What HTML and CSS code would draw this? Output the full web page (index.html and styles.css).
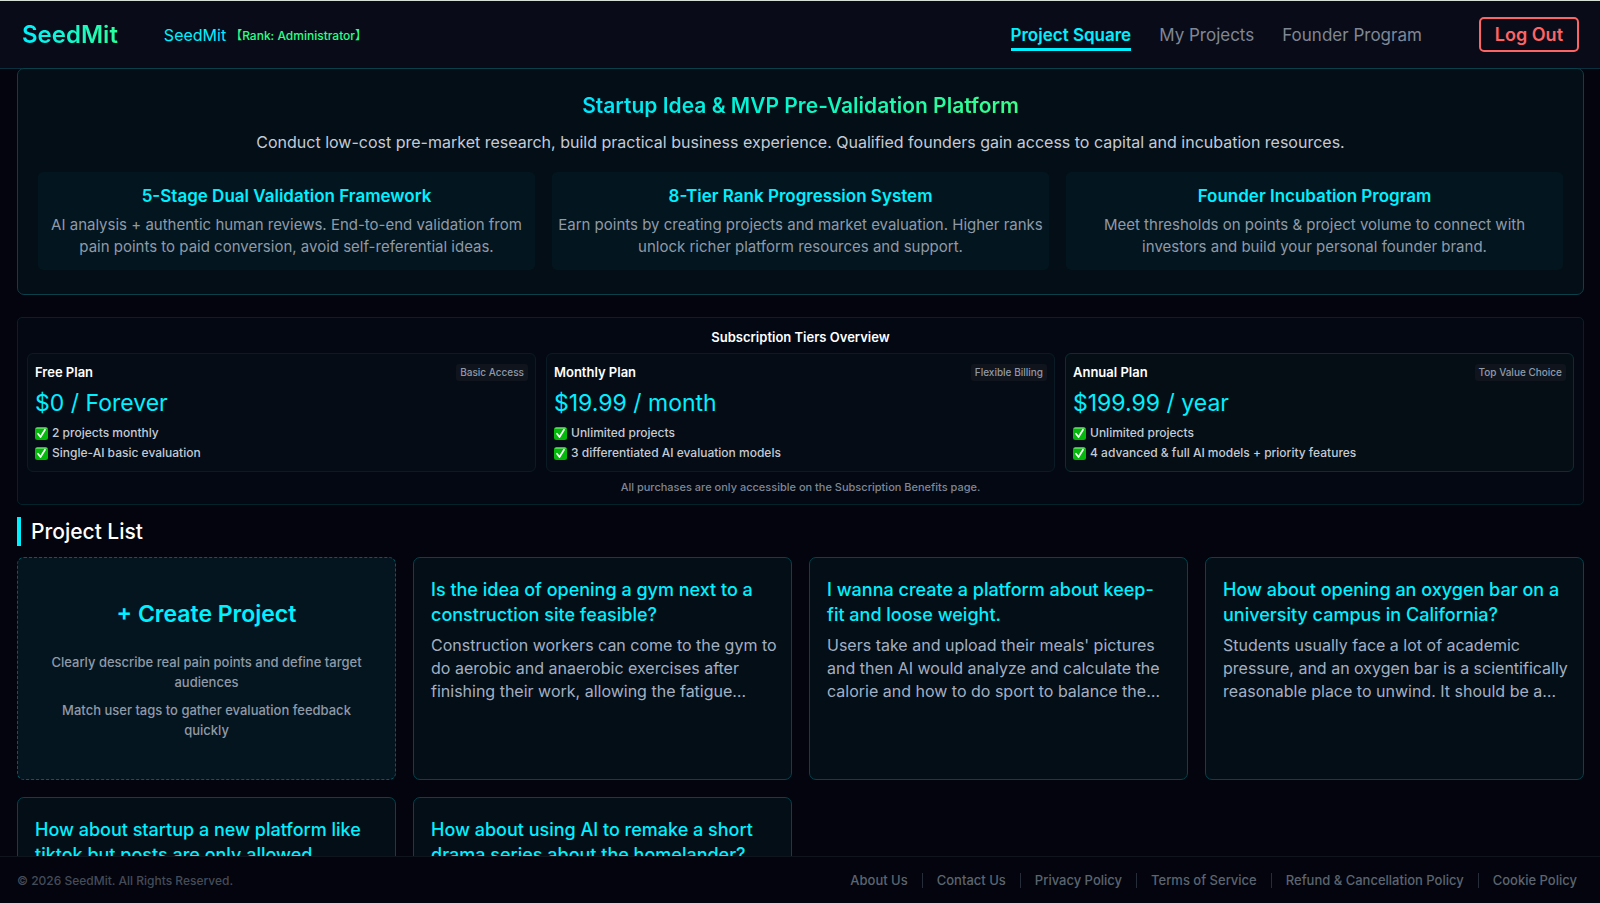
FILE: index.html
```html
<!DOCTYPE html>
<html lang="en">
<head>
    <meta charset="UTF-8">
    <meta name="viewport" content="width=device-width, initial-scale=1.0">
    <title>SeedMit - Project Square</title>
    <link rel="stylesheet" href="styles.css">
</head>
<body>
    <svg class="sprite" aria-hidden="true">
        <symbol id="check" viewBox="0 0 26 26">
            <rect x="0" y="0" width="26" height="26" rx="5" fill="#04b80c"/>
            <path d="M5 1h16a4 4 0 0 1 4 3H1a4 4 0 0 1 4-3z" fill="#4fd653"/>
            <path d="M6 13.5l5 6.5L20 5.5" fill="none" stroke="#fff" stroke-width="3.4" stroke-linecap="round" stroke-linejoin="round"/>
        </symbol>
    </svg>

    <header class="navbar">
        <a class="logo" href="#">SeedMit</a>
        <div class="user">
            <span class="user-name">SeedMit</span>
            <span class="user-rank">【Rank: Administrator】</span>
        </div>
        <nav class="nav-links">
            <a class="active" href="#">Project Square</a>
            <a href="#">My Projects</a>
            <a href="#">Founder Program</a>
        </nav>
        <button class="logout-btn" type="button">Log Out</button>
    </header>

    <main class="content">
        <section class="hero">
            <h1>Startup Idea &amp; MVP Pre-Validation Platform</h1>
            <p class="hero-text">Conduct low-cost pre-market research, build practical business experience. Qualified founders gain access to capital and incubation resources.</p>
            <div class="features">
                <div class="feature">
                    <h2>5-Stage Dual Validation Framework</h2>
                    <p>AI analysis + authentic human reviews. End-to-end validation from pain points to paid conversion, avoid self-referential ideas.</p>
                </div>
                <div class="feature">
                    <h2>8-Tier Rank Progression System</h2>
                    <p>Earn points by creating projects and market evaluation. Higher ranks unlock richer platform resources and support.</p>
                </div>
                <div class="feature">
                    <h2>Founder Incubation Program</h2>
                    <p>Meet thresholds on points &amp; project volume to connect with investors and build your personal founder brand.</p>
                </div>
            </div>
        </section>

        <section class="tiers">
            <h2 class="tiers-title">Subscription Tiers Overview</h2>
            <div class="plans">
                <div class="plan">
                    <div class="plan-head">
                        <h3>Free Plan</h3>
                        <span class="tag">Basic Access</span>
                    </div>
                    <div class="price">$0 / Forever</div>
                    <ul>
                        <li><svg class="check"><use href="#check"/></svg>2 projects monthly</li>
                        <li><svg class="check"><use href="#check"/></svg>Single-AI basic evaluation</li>
                    </ul>
                </div>
                <div class="plan">
                    <div class="plan-head">
                        <h3>Monthly Plan</h3>
                        <span class="tag">Flexible Billing</span>
                    </div>
                    <div class="price">$19.99 / month</div>
                    <ul>
                        <li><svg class="check"><use href="#check"/></svg>Unlimited projects</li>
                        <li><svg class="check"><use href="#check"/></svg>3 differentiated AI evaluation models</li>
                    </ul>
                </div>
                <div class="plan plan-best">
                    <div class="plan-head">
                        <h3>Annual Plan</h3>
                        <span class="tag">Top Value Choice</span>
                    </div>
                    <div class="price">$199.99 / year</div>
                    <ul>
                        <li><svg class="check"><use href="#check"/></svg>Unlimited projects</li>
                        <li><svg class="check"><use href="#check"/></svg>4 advanced &amp; full AI models + priority features</li>
                    </ul>
                </div>
            </div>
            <p class="tiers-note">All purchases are only accessible on the Subscription Benefits page.</p>
        </section>

        <h2 class="list-title">Project List</h2>
        <section class="projects">
            <a class="card create-card" href="#">
                <h3>+ Create Project</h3>
                <p>Clearly describe real pain points and define target audiences</p>
                <p>Match user tags to gather evaluation feedback quickly</p>
            </a>
            <article class="card">
                <h3>Is the idea of opening a gym next to a construction site feasible?</h3>
                <p>Construction workers can come to the gym to do aerobic and anaerobic exercises after finishing their work, allowing the fatigue…</p>
            </article>
            <article class="card">
                <h3>I wanna create a platform about keep-fit and loose weight.</h3>
                <p>Users take and upload their meals' pictures and then AI would analyze and calculate the calorie and how to do sport to balance the…</p>
            </article>
            <article class="card">
                <h3>How about opening an oxygen bar on a university campus in California?</h3>
                <p>Students usually face a lot of academic pressure, and an oxygen bar is a scientifically reasonable place to unwind. It should be a…</p>
            </article>
            <article class="card">
                <h3>How about startup a new platform like tiktok but posts are only allowed</h3>
            </article>
            <article class="card">
                <h3>How about using AI to remake a short drama series about the homelander?</h3>
            </article>
        </section>
    </main>

    <footer class="footer">
        <span>© 2026 SeedMit. All Rights Reserved.</span>
        <nav class="footer-links">
            <a href="#">About Us</a>
            <a href="#">Contact Us</a>
            <a href="#">Privacy Policy</a>
            <a href="#">Terms of Service</a>
            <a href="#">Refund &amp; Cancellation Policy</a>
            <a href="#">Cookie Policy</a>
        </nav>
    </footer>
</body>
</html>
```
FILE: styles.css
```css
* {
    box-sizing: border-box;
    margin: 0;
    padding: 0;
}

body {
    display: flex;
    flex-direction: column;
    height: 100vh;
    background: #03040d;
    color: #fff;
    font-family: Inter, "Noto Sans CJK SC", sans-serif;
    font-size: 16px;
}

a {
    color: inherit;
    text-decoration: none;
}

.sprite {
    display: none;
}

/* top bar */
.navbar {
    display: flex;
    align-items: center;
    flex-shrink: 0;
    height: 69px;
    padding: 0 21px 0 22px;
    background: #090c18;
    border-top: 1px solid #d5dfd8;
    border-bottom: 1px solid #0a303d;
}

.logo {
    font-size: 24px;
    font-weight: 600;
    background: linear-gradient(90deg, #00f0ff, #2bff9a);
    -webkit-background-clip: text;
    background-clip: text;
    color: transparent;
}

.user {
    display: flex;
    align-items: center;
    gap: 4px;
    margin-left: 46px;
}

.user-name {
    color: #00f0ff;
}

.user-rank {
    font-size: 12px;
    font-weight: 500;
    color: #2bff88;
}

.nav-links {
    display: flex;
    gap: 28px;
    margin-left: auto;
    font-size: 17px;
    line-height: 26px;
    color: #7f8796;
}

.nav-links a {
    border-bottom: 3px solid transparent;
    padding-top: 3px;
}

.nav-links .active {
    color: #00f0ff;
    font-weight: 600;
    border-bottom-color: #00f0ff;
}

.logout-btn {
    height: 35px;
    margin-left: 57px;
    padding: 0 14px;
    background: transparent;
    border: 2px solid #ff6464;
    border-radius: 5px;
    color: #ff6464;
    font-family: inherit;
    font-size: 18px;
    font-weight: 600;
    cursor: pointer;
}

.content {
    flex: 1;
    min-height: 0;
    margin-top: -1px;
    padding: 0 16px 16px 17px;
    overflow-y: auto;
    scrollbar-width: none;
}

/* hero */
.hero {
    padding: 22px 20px 24px;
    background: #040e16;
    border: 1px solid #0a404a;
    border-radius: 7px;
    text-align: center;
}

.hero h1 {
    width: fit-content;
    margin: 0 auto 7px;
    font-size: 21px;
    font-weight: 600;
    line-height: 30px;
    background: linear-gradient(90deg, #00e5ff, #00f5d4 40%, #3bff88);
    -webkit-background-clip: text;
    background-clip: text;
    color: transparent;
}

.hero-text {
    margin-bottom: 16px;
    line-height: 28px;
    color: #c3cbd6;
}

.features {
    display: grid;
    grid-template-columns: repeat(3, 1fr);
    gap: 17px;
}

.feature {
    padding: 12px 6px;
    background: #03151e;
    border-radius: 5px;
}

.feature h2 {
    margin-bottom: 6px;
    font-size: 17px;
    font-weight: 600;
    line-height: 24px;
    color: #00f0ff;
}

.feature p {
    font-size: 15px;
    line-height: 22px;
    color: #8f9aa8;
}

/* subscription tiers */
.tiers {
    margin-top: 22px;
    padding: 8px 9px 7px;
    background: #030812;
    border: 1px solid #04222a;
    border-radius: 5px;
}

.tiers-title {
    margin-bottom: 5px;
    font-size: 13px;
    font-weight: 600;
    line-height: 22px;
    text-align: center;
}

.plans {
    display: grid;
    grid-template-columns: repeat(3, 1fr);
    gap: 10px;
}

.plan {
    padding: 8px 7px;
    background: #060c15;
    border: 1px solid #0a1b25;
    border-radius: 6px;
}

.plan-best {
    background: #050e15;
    border-color: #0a2e33;
}

.plan-head {
    display: flex;
    justify-content: space-between;
    align-items: center;
    height: 20px;
}

.plan h3 {
    font-size: 13px;
    font-weight: 600;
}

.tag {
    padding: 0 4px;
    background: #0f141d;
    border-radius: 3px;
    font-size: 10px;
    font-weight: 500;
    line-height: 17px;
    color: #8f9aa8;
}

.price {
    margin: 5px 0 4px;
    font-size: 23px;
    line-height: 32px;
    color: #00f0ff;
}

.plan ul {
    list-style: none;
    font-size: 12px;
    font-weight: 500;
    line-height: 20px;
    color: #c3cbd6;
}

.plan li {
    display: flex;
    align-items: center;
    gap: 4px;
}

.check {
    width: 13px;
    height: 13px;
}

.tiers-note {
    margin-top: 5px;
    font-size: 11px;
    font-weight: 500;
    line-height: 20px;
    text-align: center;
    color: #7f8796;
}

/* project list */
.list-title {
    margin: 12px 0 11px;
    padding-left: 10px;
    border-left: 4px solid #00f0ff;
    font-size: 21px;
    font-weight: 500;
    line-height: 29px;
}

.projects {
    display: grid;
    grid-template-columns: repeat(4, 1fr);
    grid-auto-rows: 223px;
    gap: 17px;
}

.card {
    padding: 19px 10px 19px 17px;
    background: #040e16;
    border: 1px solid #06434b;
    border-radius: 7px;
    overflow: hidden;
}

.card h3 {
    margin: 0 10px 7px 0;
    font-size: 18px;
    font-weight: 500;
    line-height: 25px;
    color: #00f0ff;
}

.card p {
    line-height: 23px;
    color: #a3b0c4;
}

.create-card {
    display: flex;
    flex-direction: column;
    justify-content: center;
    gap: 8px;
    padding: 19px 24px;
    background: #05151f;
    border: 1px dashed #075a62;
    text-align: center;
}

.create-card h3 {
    margin: 0 0 14px;
    font-size: 23px;
    font-weight: 600;
    line-height: 32px;
}

.create-card p {
    font-size: 13px;
    font-weight: 500;
    line-height: 20px;
    color: #8f9aa8;
}

.footer {
    display: flex;
    justify-content: space-between;
    align-items: center;
    flex-shrink: 0;
    height: 47px;
    padding: 0 23px 0 17px;
    background: #03040d;
    border-top: 1px solid #10141d;
    font-size: 12px;
    font-weight: 500;
    color: #444c59;
}

.footer-links {
    display: flex;
    font-size: 13px;
    line-height: 15px;
    color: #5b6470;
}

.footer-links a + a {
    margin-left: 14px;
    padding-left: 14px;
    border-left: 1px solid #262d38;
}
```
